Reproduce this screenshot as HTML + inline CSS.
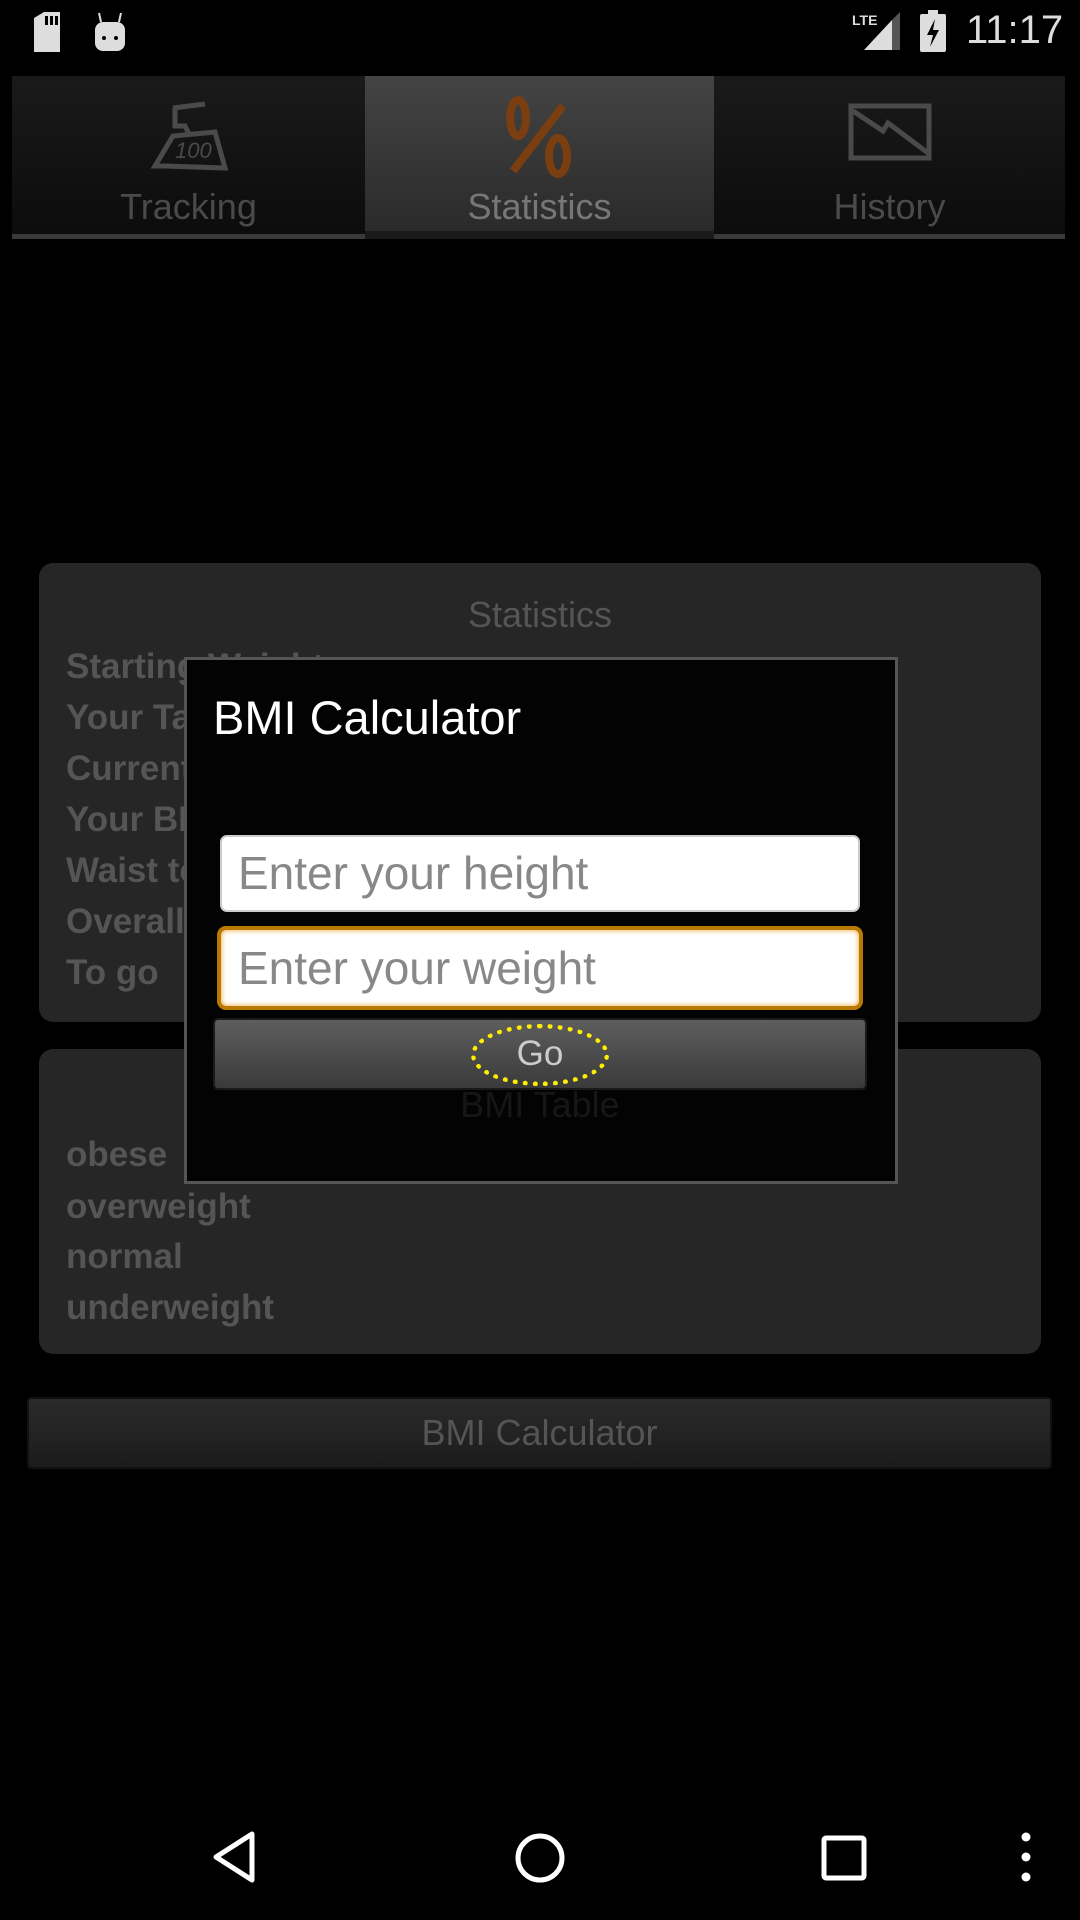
<!DOCTYPE html>
<html><head><meta charset="utf-8"><style>
*{margin:0;padding:0;box-sizing:border-box}
body{width:1080px;height:1920px;background:#000;position:relative;overflow:hidden;font-family:"Liberation Sans",sans-serif}
.abs{position:absolute}
.tab{position:absolute;top:76px;height:163px;background:linear-gradient(#1a1a1a,#0c0c0c);border-bottom:5px solid #3a3a3a}
.tab span{position:absolute;left:0;right:0;top:110px;text-align:center;font-size:36px;color:#4a4a4a}
.panel{position:absolute;left:39px;width:1002px;background:#262626;border-radius:14px}
.row{position:absolute;left:66px;font-size:35px;font-weight:bold;color:#555}
</style></head><body>
<!-- status bar -->
<svg class="abs" style="left:30px;top:12px" width="110" height="40">
<path d="M4 6 L14 0 H30 V40 H4 Z" fill="#ddd" rx="3"/><rect x="15" y="4" width="3" height="9" fill="#000"/><rect x="20" y="4" width="3" height="9" fill="#000"/><rect x="25" y="4" width="3" height="9" fill="#000"/>
<rect x="65" y="10" width="30" height="29" rx="8" fill="#ddd"/><line x1="69" y1="1" x2="71" y2="10" stroke="#ddd" stroke-width="2"/><line x1="91" y1="1" x2="89" y2="10" stroke="#ddd" stroke-width="2"/><circle cx="74" cy="26" r="2" fill="#000"/><circle cx="86" cy="26" r="2" fill="#000"/>
</svg>
<div class="abs" style="left:852px;top:12px;font-size:14px;color:#ddd;font-weight:bold">LTE</div>
<svg class="abs" style="left:862px;top:12px" width="40" height="40"><path d="M2 38 L30 8 V38Z" fill="#ddd"/><path d="M30 8 L38 0 V38 H30Z" fill="#555"/></svg>
<svg class="abs" style="left:920px;top:10px" width="26" height="42"><rect x="8" y="0" width="10" height="5" fill="#ddd"/><rect x="0" y="4" width="26" height="38" rx="2" fill="#ddd"/><path d="M15 9 L7 25 H13 L10 37 L19 20 H13 Z" fill="#000"/></svg>
<div class="abs" style="left:966px;top:8px;font-size:40px;color:#ddd">11:17</div>
<!-- tabs -->
<div class="tab" style="left:12px;width:353px"><span>Tracking</span>
<svg class="abs" style="left:133px;top:20px" width="90" height="80" fill="none" stroke="#4a4a4a" stroke-width="5"><path d="M28 12 L60 8 M30 12 L30 30 L40 30 L44 38 M20 70 L10 70 L28 40 L70 36 L80 72 Z"/><text x="30" y="62" font-size="22" fill="#4a4a4a" stroke="none" font-style="italic">100</text></svg></div>
<div class="tab" style="left:365px;width:349px;background:linear-gradient(#444,#2a2a2a);border-bottom:8px solid #1a1a1a"><span style="color:#777">Statistics</span>
<svg class="abs" style="left:128px;top:15px" width="90" height="90" fill="none" stroke="#7a3e10" stroke-width="8"><ellipse cx="25" cy="27" rx="8" ry="18"/><ellipse cx="65" cy="65" rx="9" ry="18"/><line x1="70" y1="15" x2="20" y2="80"/></svg></div>
<div class="tab" style="left:714px;width:351px"><span>History</span>
<svg class="abs" style="left:134px;top:27px" width="86" height="60" fill="none" stroke="#4a4a4a" stroke-width="5"><rect x="3" y="3" width="78" height="52"/><path d="M5 8 L35 28 L40 20 L80 50"/></svg></div>
<!-- stats panel -->
<div class="panel" style="top:563px;height:459px"></div>
<div class="abs" style="left:0;width:1080px;top:594px;text-align:center;font-size:36px;color:#555">Statistics</div>
<div class="row" style="top:647px">Starting Weight</div>
<div class="row" style="top:698px">Your Target Weight</div>
<div class="row" style="top:749px">Current Weight</div>
<div class="row" style="top:800px">Your BMI</div>
<div class="row" style="top:851px">Waist to hip</div>
<div class="row" style="top:902px">Overall loss</div>
<div class="row" style="top:953px">To go</div>
<div class="panel" style="top:1049px;height:305px"></div>
<div class="row" style="top:1135px">obese</div>
<div class="row" style="top:1187px">overweight</div>
<div class="row" style="top:1237px">normal</div>
<div class="row" style="top:1288px">underweight</div>
<div class="abs" style="left:27px;top:1397px;width:1025px;height:72px;background:linear-gradient(#2a2a2a,#1c1c1c);border-radius:4px;border:2px solid #111;text-align:center;line-height:68px;font-size:36px;color:#555">BMI Calculator</div>
<!-- dialog -->
<div class="abs" style="left:184px;top:657px;width:714px;height:527px;background:#030303;border:3px solid #555"></div>
<div class="abs" style="left:0;width:1080px;top:1084px;text-align:center;font-size:36px;color:#161616">BMI Table</div>
<div class="abs" style="left:213px;top:690px;font-size:47px;color:#fff">BMI Calculator</div>
<div class="abs" style="left:220px;top:835px;width:640px;height:77px;background:#fff;border-radius:7px;border:2px solid #ccc;font-size:46px;color:#888;line-height:73px;padding-left:16px">Enter your height</div>
<div class="abs" style="left:217px;top:926px;width:646px;height:84px;background:#fff;border-radius:9px;border:4px solid #b87a00;box-shadow:inset 0 0 6px #f0a030;font-size:46px;color:#888;line-height:76px;padding-left:17px">Enter your weight</div>
<div class="abs" style="left:213px;top:1018px;width:654px;height:72px;background:linear-gradient(#5e5e5e,#3a3a3a);border-radius:5px;border:2px solid #1a1a1a"></div>
<div class="abs" style="left:471px;top:1024px;width:138px;height:62px;border:5px dotted #ffee00;border-radius:50%"></div>
<div class="abs" style="left:0;width:1080px;top:1034px;text-align:center;font-size:35px;color:#ccc">Go</div>
<!-- nav -->
<svg class="abs" style="left:210px;top:1830px" width="50" height="54"><path d="M42 4 L6 27 L42 50 Z" fill="none" stroke="#fff" stroke-width="5" stroke-linejoin="round"/></svg>
<svg class="abs" style="left:512px;top:1830px" width="56" height="56"><circle cx="28" cy="28" r="22" fill="none" stroke="#fff" stroke-width="5"/></svg>
<svg class="abs" style="left:820px;top:1834px" width="48" height="48"><rect x="4" y="4" width="40" height="40" rx="2" fill="none" stroke="#fff" stroke-width="5"/></svg>
<svg class="abs" style="left:1018px;top:1832px" width="16" height="50"><circle cx="8" cy="5" r="4.5" fill="#fff"/><circle cx="8" cy="25" r="4.5" fill="#fff"/><circle cx="8" cy="45" r="4.5" fill="#fff"/></svg>
</body></html>
